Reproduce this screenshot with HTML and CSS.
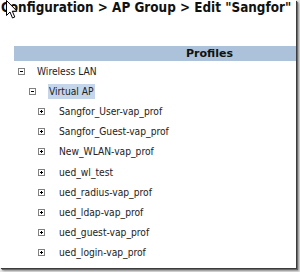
FILE: index.html
```html
<!DOCTYPE html>
<html>
<head>
<meta charset="utf-8">
<link rel="stylesheet" href="styles.css">
</head>
<body>
<div class="frame">
  <h1 class="title">Configuration &gt; AP Group &gt; Edit "Sangfor"</h1>
  <div class="bar"><span class="bar-label">Profiles</span></div>
  <ul class="tree">
    <li class="row lv0"><span class="tg minus"></span><span class="lbl">Wireless LAN</span></li>
    <li class="row lv1"><span class="tg minus"></span><span class="lbl sel">Virtual AP</span></li>
    <li class="row lv2"><span class="tg plus"></span><span class="lbl">Sangfor_User-vap_prof</span></li>
    <li class="row lv2"><span class="tg plus"></span><span class="lbl">Sangfor_Guest-vap_prof</span></li>
    <li class="row lv2"><span class="tg plus"></span><span class="lbl">New_WLAN-vap_prof</span></li>
    <li class="row lv2"><span class="tg plus"></span><span class="lbl">ued_wl_test</span></li>
    <li class="row lv2"><span class="tg plus"></span><span class="lbl">ued_radius-vap_prof</span></li>
    <li class="row lv2"><span class="tg plus"></span><span class="lbl">ued_ldap-vap_prof</span></li>
    <li class="row lv2"><span class="tg plus"></span><span class="lbl">ued_guest-vap_prof</span></li>
    <li class="row lv2"><span class="tg plus"></span><span class="lbl">ued_login-vap_prof</span></li>
  </ul>
  <svg class="cursor" width="13" height="20" viewBox="0 0 13 20">
    <path d="M0.5 0.5 L0.5 15.5 L4 12 L6.5 18 L8.8 17 L6.3 11.2 L11 11.2 Z" fill="#fff" stroke="#000" stroke-width="1" stroke-linejoin="miter"/>
  </svg>
</div>
</body>
</html>
```

FILE: styles.css
```css
html, body {
  margin: 0;
  padding: 0;
}
body {
  width: 300px;
  height: 272px;
  background: #e6e6e6;
  overflow: hidden;
}
.frame {
  position: relative;
  width: 296px;
  height: 268px;
  background: #fff;
  box-shadow: 1px 1px 0 #3c3c3c, 2px 2px 1px #6a6a6a, 3px 3px 2px #9a9a9a;
  overflow: hidden;
}
.title {
  margin: 0;
  padding: 0 0 0 1px;
  height: 46px;
  font-family: "DejaVu Sans Condensed", "DejaVu Sans", sans-serif;
  font-weight: bold;
  font-size: 13.4px;
  line-height: 16px;
  color: #111;
  white-space: nowrap;
}
.bar {
  margin-left: 14px;
  height: 15px;
  background: #abc2da;
  display: flex;
  align-items: center;
  padding-left: 172px;
}
.bar-label {
  font-family: "DejaVu Sans", sans-serif;
  font-weight: bold;
  font-size: 11px;
  color: #111;
}
.tree {
  list-style: none;
  margin: 0;
  padding: 0;
}
.row {
  height: 20.2px;
  display: flex;
  align-items: center;
  font-family: "DejaVu Sans Condensed", "DejaVu Sans", sans-serif;
  font-size: 10.2px;
  color: #222;
}
.lv0 { padding-left: 18px; }
.lv1 { padding-left: 29px; }
.lv2 { padding-left: 38px; }
.tg {
  position: relative;
  width: 7px;
  height: 7px;
  box-sizing: border-box;
  border: 1px solid #808080;
  background: #fff;
  flex: none;
}
.tg::before {
  content: "";
  position: absolute;
  left: 1px;
  top: 2px;
  width: 3px;
  height: 1px;
  background: #000;
}
.plus::after {
  content: "";
  position: absolute;
  left: 2px;
  top: 1px;
  width: 1px;
  height: 3px;
  background: #000;
}
.lv0 .lbl { margin-left: 12px; }
.lv1 .lbl { margin-left: 13px; }
.lv2 .lbl { margin-left: 14px; }
.sel {
  background: #c5d6eb;
  padding: 2px 1px;
  margin-left: 12px !important;
}
.cursor {
  position: absolute;
  left: 6px;
  top: 0;
}
```
